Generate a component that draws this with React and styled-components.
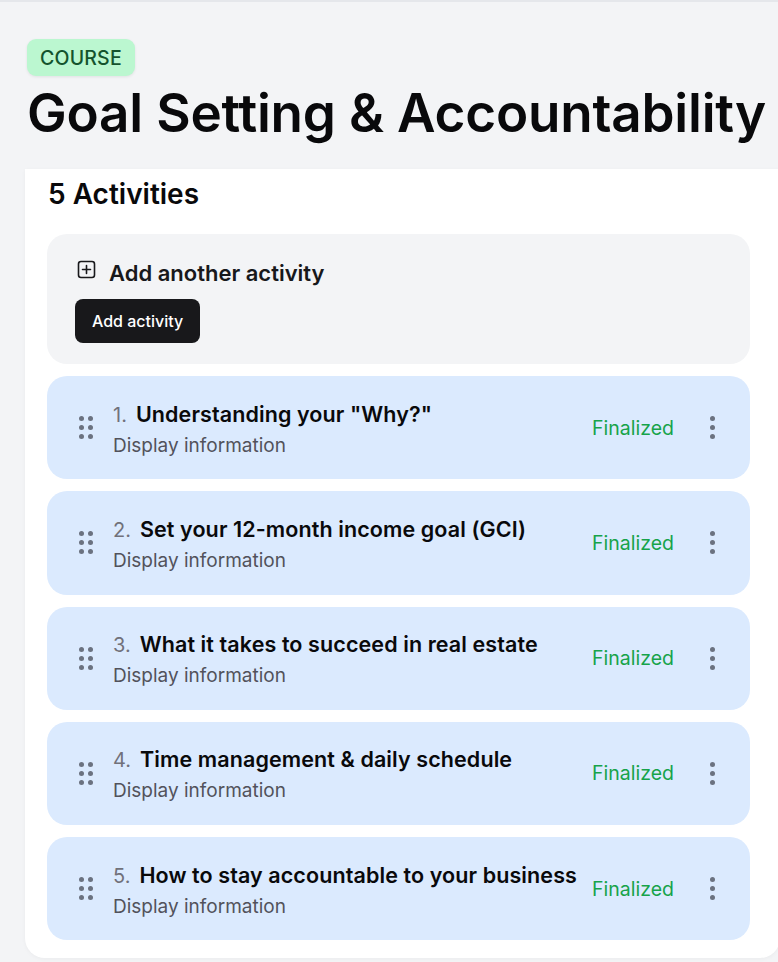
import React from "react";
import styled, { createGlobalStyle } from "styled-components";

const GlobalStyle = createGlobalStyle`
  html, body {
    margin: 0;
    padding: 0;
    background: #f3f4f6;
    overflow-x: hidden;
    font-family: Inter, "Noto Sans", sans-serif;
  }
  * {
    box-sizing: border-box;
  }
`;

const Page = styled.div`
  min-height: 962px;
  border-top: 2px solid #e5e7eb;
  background: #f3f4f6;
`;

const Header = styled.header`
  padding: 37px 0 0 27px;
  display: flex;
  flex-direction: column;
  align-items: flex-start;
`;

const Badge = styled.span`
  display: inline-block;
  padding: 7px 13px 6px;
  border-radius: 9px;
  background: #bbf7d0;
  color: #14532d;
  font-size: 19.5px;
  font-weight: 500;
  letter-spacing: 0.2px;
  line-height: 24px;
  box-shadow: 0 1px 3px rgba(0, 0, 0, 0.08);
`;

const Title = styled.h1`
  margin: 6px 0 0;
  font-size: 53px;
  font-weight: 600;
  line-height: 62px;
  color: #09090b;
  letter-spacing: -0.2px;
  white-space: nowrap;
`;

const Panel = styled.section`
  margin: 25px 0 0 25px;
  width: 755px;
  padding: 8px 30px 18px 22px;
  background: #fff;
  border-radius: 0 0 20px 20px;
  box-shadow: 0 1px 4px rgba(0, 0, 0, 0.04);
`;

const Count = styled.h2`
  margin: 0 0 23px 1px;
  font-size: 28px;
  font-weight: 600;
  line-height: 34px;
  color: #09090b;
`;

const AddCard = styled.div`
  background: #f3f4f6;
  border-radius: 20px;
  padding: 24px 28px 21px;
  display: flex;
  flex-direction: column;
  align-items: flex-start;
  gap: 11px;
`;

const AddHeading = styled.div`
  display: flex;
  align-items: center;
  gap: 12px;
  font-size: 22px;
  font-weight: 600;
  color: #18181b;
  line-height: 30px;
  padding-left: 2px;

  svg {
    margin-top: -6px;
  }
`;

const DarkButton = styled.button`
  height: 44px;
  padding: 0 17px;
  border: none;
  border-radius: 8px;
  background: #18181b;
  color: #fff;
  font-family: inherit;
  font-size: 16px;
  font-weight: 500;
  cursor: pointer;
`;

const List = styled.div`
  margin-top: 12px;
  display: flex;
  flex-direction: column;
  gap: 12px;
`;

const Row = styled.div`
  height: 103.25px;
  background: #dbeafe;
  border-radius: 20px;
  padding: 0 26px 0 32px;
  display: flex;
  align-items: center;
`;

const Handle = styled.div`
  display: grid;
  grid-template-columns: repeat(2, 5px);
  grid-auto-rows: 5px;
  gap: 4px;
  margin-right: 20px;

  span {
    width: 5px;
    height: 5px;
    border-radius: 50%;
    background: #6b7280;
  }
`;

const Info = styled.div`
  flex: 1;
  min-width: 0;
  display: flex;
  flex-direction: column;
  gap: 4px;
  padding-top: 3px;
`;

const NameLine = styled.div`
  display: flex;
  align-items: baseline;
  gap: 9px;
  white-space: nowrap;
  line-height: 28px;
`;

const Num = styled.span`
  font-size: 20px;
  font-weight: 400;
  color: #71717a;
`;

const Name = styled.span`
  font-size: 21.5px;
  font-weight: 600;
  color: #09090b;
  letter-spacing: 0.1px;
`;

const Sub = styled.div`
  font-size: 19px;
  color: #52525b;
  line-height: 26px;
`;

const Status = styled.span`
  margin-left: 5px;
  font-size: 19.5px;
  color: #16a34a;
  width: 84px;
`;

const Kebab = styled.button`
  margin-left: 24px;
  width: 24px;
  height: 32px;
  border: none;
  background: none;
  padding: 0;
  display: flex;
  flex-direction: column;
  align-items: center;
  justify-content: center;
  gap: 4px;
  cursor: pointer;

  span {
    width: 5px;
    height: 5px;
    border-radius: 50%;
    background: #6b7280;
  }
`;

const PlusSquare = () => (
  <svg width="20" height="20" viewBox="0 0 20 20" fill="none" stroke="#18181b" strokeWidth="1.6">
    <rect x="1.5" y="1.5" width="16" height="16" rx="2.5" />
    <path d="M9.5 5.5v8M5.5 9.5h8" strokeLinecap="round" />
  </svg>
);

const activities = [
  'Understanding your "Why?"',
  "Set your 12-month income goal (GCI)",
  "What it takes to succeed in real estate",
  "Time management & daily schedule",
  "How to stay accountable to your business",
];

const App = () => (
  <Page>
    <GlobalStyle />
    <Header>
      <Badge>COURSE</Badge>
      <Title>Goal Setting &amp; Accountability</Title>
    </Header>
    <Panel>
      <Count>{activities.length} Activities</Count>
      <AddCard>
        <AddHeading>
          <PlusSquare />
          Add another activity
        </AddHeading>
        <DarkButton>Add activity</DarkButton>
      </AddCard>
      <List>
        {activities.map((name, i) => (
          <Row key={name}>
            <Handle>
              {Array.from({ length: 6 }).map((_, d) => (
                <span key={d} />
              ))}
            </Handle>
            <Info>
              <NameLine>
                <Num>{i + 1}.</Num>
                <Name>{name}</Name>
              </NameLine>
              <Sub>Display information</Sub>
            </Info>
            <Status>Finalized</Status>
            <Kebab aria-label="More">
              <span />
              <span />
              <span />
            </Kebab>
          </Row>
        ))}
      </List>
    </Panel>
  </Page>
);

export default App;
